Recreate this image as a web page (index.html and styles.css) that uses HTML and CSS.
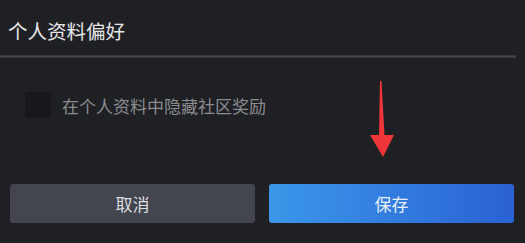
FILE: index.html
```html
<!DOCTYPE html>
<html lang="zh-CN">
<head>
<meta charset="utf-8">
<link rel="stylesheet" href="styles.css">
</head>
<body>
<div class="dialog">
  <div class="header"><span class="title">个人资料偏好</span></div>
  <div class="divider"></div>
  <div class="content">
    <label class="option">
      <span class="checkbox"></span>
      <span class="label">在个人资料中隐藏社区奖励</span>
    </label>
  </div>
  <div class="actions">
    <button class="btn cancel">取消</button>
    <button class="btn save">保存</button>
  </div>
  <svg class="arrow" width="26" height="80" viewBox="0 0 26 80">
    <polygon points="10,0 11.5,0 14.5,54 24,54 13,76 0,54 9,54" fill="#f03539"/>
  </svg>
</div>
</body>
</html>
```
FILE: styles.css
```css
html, body {
  margin: 0;
  padding: 0;
  background: #1f2024;
}
.dialog {
  position: relative;
  width: 525px;
  height: 243px;
  font-family: "Noto Sans CJK SC", "Noto Sans", sans-serif;
}
.header {
  height: 55px;
  display: flex;
  align-items: center;
  padding: 0 8px;
}
.title {
  color: #e6e6e8;
  font-size: 19.5px;
  margin-top: 6px;
}
.divider {
  height: 3px;
  margin-right: 9px;
  background: linear-gradient(#2f3033, #46474a 50%, #2f3033);
}
.content {
  padding: 34px 0 0 25px;
  height: 126px;
  box-sizing: border-box;
}
.option {
  display: flex;
  align-items: center;
  gap: 11px;
}
.checkbox {
  width: 26px;
  height: 26px;
  background: #17181b;
  border-radius: 2px;
}
.label {
  color: #8b8c90;
  font-size: 17px;
}
.actions {
  display: flex;
  gap: 14px;
  padding: 0 11px 0 10px;
}
.btn {
  flex: 1;
  height: 39px;
  border: none;
  border-radius: 3px;
  font-family: "Noto Sans CJK SC", "Noto Sans", sans-serif;
  font-size: 17px;
  padding: 0;
}
.cancel {
  background: #43464f;
  color: #dcdde0;
}
.save {
  background: linear-gradient(90deg, #3b97e9, #2a62d4);
  color: #e8effa;
}
.arrow {
  position: absolute;
  left: 370px;
  top: 81px;
}
```
